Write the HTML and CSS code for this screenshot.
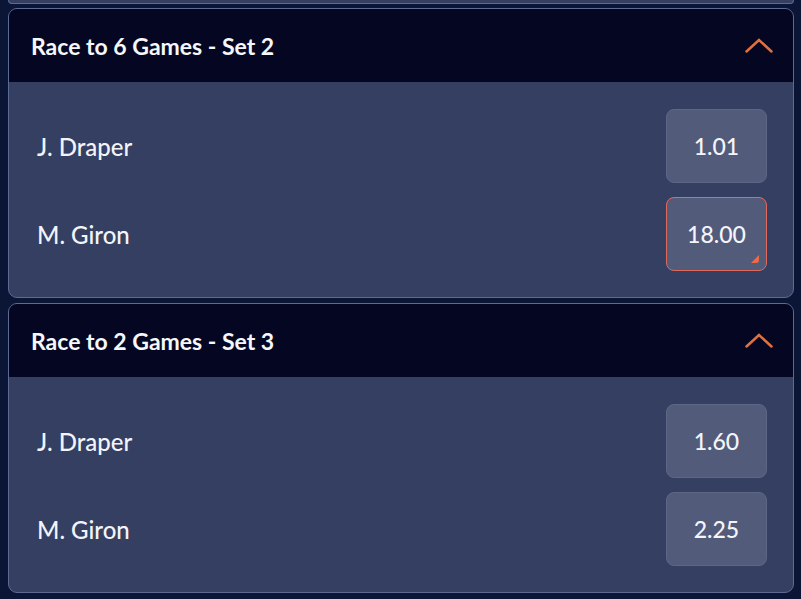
FILE: index.html
```html
<!DOCTYPE html>
<html lang="en">
<head>
    <meta charset="UTF-8">
    <meta name="viewport" content="width=device-width, initial-scale=1.0">
    <title>Tennis Markets</title>
    <link rel="stylesheet" href="styles.css">
</head>
<body>
    <!-- bottom edge of the previous market -->
    <div class="card-stub"></div>

    <div class="market">
        <div class="market-header">
            <h3>Race to 6 Games - Set 2</h3>
            <svg class="chevron" width="28" height="15" viewBox="0 0 28 15">
                <path d="M1.5 13.5 L14 2 L26.5 13.5" />
            </svg>
        </div>
        <div class="market-body">
            <div class="selection">
                <span class="name">J. Draper</span>
                <button class="odds">1.01</button>
            </div>
            <div class="selection">
                <span class="name">M. Giron</span>
                <button class="odds selected">18.00</button>
            </div>
        </div>
    </div>

    <div class="market">
        <div class="market-header">
            <h3>Race to 2 Games - Set 3</h3>
            <svg class="chevron" width="28" height="15" viewBox="0 0 28 15">
                <path d="M1.5 13.5 L14 2 L26.5 13.5" />
            </svg>
        </div>
        <div class="market-body">
            <div class="selection">
                <span class="name">J. Draper</span>
                <button class="odds">1.60</button>
            </div>
            <div class="selection">
                <span class="name">M. Giron</span>
                <button class="odds">2.25</button>
            </div>
        </div>
    </div>
</body>
</html>
```

FILE: styles.css
```css
body {
    font-family: Lato, "Open Sans", sans-serif;
    background-color: #0b1535;
    color: #f2f4fa;
    margin: 0;
    padding: 0 7px 0 8px;
}

.card-stub {
    height: 3px;
    margin-bottom: 4px;
    background-color: #353f62;
    border: 1.5px solid #5d6b94;
    border-top: none;
    border-radius: 0 0 8px 8px;
}

.market {
    background-color: #353f62;
    border: 1.5px solid #5d6b94;
    border-radius: 9px;
    overflow: hidden;
    margin-bottom: 5px;
}

.market-header {
    display: flex;
    align-items: center;
    justify-content: space-between;
    height: 73px;
    padding: 0 20px 0 22px;
    background-color: #050722;
}

.market-header h3 {
    margin: 0;
    font-size: 23px;
    font-weight: bold;
    color: #f6f7fb;
}

.chevron path {
    fill: none;
    stroke: #e0703c;
    stroke-width: 2.5;
    stroke-linecap: round;
    stroke-linejoin: miter;
}

.market-body {
    display: flex;
    flex-direction: column;
    gap: 14px;
    padding: 27px 26px 26px 28px;
}

.selection {
    display: flex;
    align-items: center;
    justify-content: space-between;
}

.name {
    font-size: 24px;
    font-weight: 500;
}

.odds {
    position: relative;
    width: 101px;
    height: 74px;
    font-family: inherit;
    font-size: 23px;
    font-weight: 500;
    color: #f4f5fa;
    background-color: #535b7a;
    border: 1.5px solid #5e6687;
    border-radius: 8px;
}

.odds.selected {
    border-color: #e0695a;
}

/* little corner mark on the picked price */
.odds.selected::after {
    content: "";
    position: absolute;
    right: 7px;
    bottom: 7px;
    width: 8px;
    height: 8px;
    background-color: #ee6a45;
    clip-path: polygon(100% 0, 100% 100%, 0 100%);
    border-radius: 0 0 3px 0;
}
```
